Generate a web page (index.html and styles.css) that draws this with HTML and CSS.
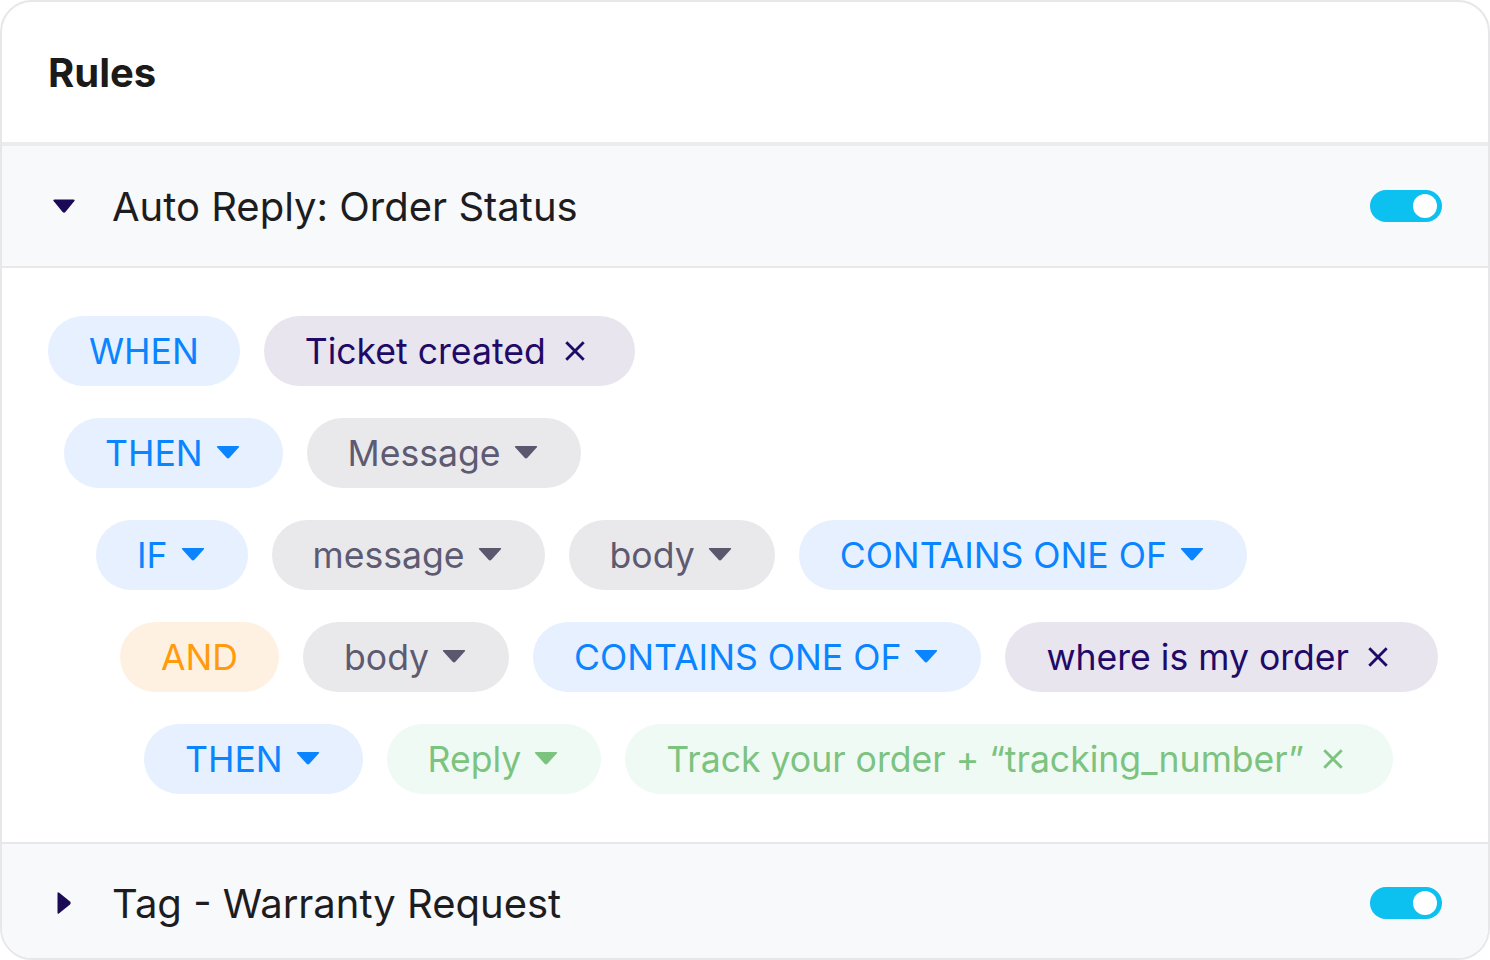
FILE: index.html
```html
<!DOCTYPE html>
<html lang="en">
<head>
<meta charset="utf-8">
<title>Rules</title>
<link rel="stylesheet" href="styles.css">
</head>
<body>
<div class="card">
  <div class="card-header">Rules</div>

  <div class="rule-head">
    <span class="chev">
      <svg width="24" height="16" viewBox="0 0 24 16"><path d="M2.5 1.5 H21.5 Q23.5 1.5 22.2 3.2 L13.4 14 Q12 15.6 10.6 14 L1.8 3.2 Q0.5 1.5 2.5 1.5 Z" fill="#1b0a55"/></svg>
    </span>
    <span class="rule-title">Auto Reply: Order Status</span>
    <span class="toggle"><span class="knob"></span></span>
  </div>

  <div class="rule-body">
    <div class="row r1">
      <span class="pill blue">WHEN</span>
      <span class="pill purple">Ticket created<svg class="x" viewBox="0 0 20 20"><path d="M3 3 L17 17 M17 3 L3 17" /></svg></span>
    </div>
    <div class="row r2">
      <span class="pill blue caret">THEN<svg class="tri" viewBox="0 0 24 14"><path d="M2 1 H22 Q24 1 22.7 2.6 L13.4 12.8 Q12 14.2 10.6 12.8 L1.3 2.6 Q0 1 2 1 Z"/></svg></span>
      <span class="pill grey caret">Message<svg class="tri" viewBox="0 0 24 14"><path d="M2 1 H22 Q24 1 22.7 2.6 L13.4 12.8 Q12 14.2 10.6 12.8 L1.3 2.6 Q0 1 2 1 Z"/></svg></span>
    </div>
    <div class="row r3">
      <span class="pill blue caret">IF<svg class="tri" viewBox="0 0 24 14"><path d="M2 1 H22 Q24 1 22.7 2.6 L13.4 12.8 Q12 14.2 10.6 12.8 L1.3 2.6 Q0 1 2 1 Z"/></svg></span>
      <span class="pill grey caret">message<svg class="tri" viewBox="0 0 24 14"><path d="M2 1 H22 Q24 1 22.7 2.6 L13.4 12.8 Q12 14.2 10.6 12.8 L1.3 2.6 Q0 1 2 1 Z"/></svg></span>
      <span class="pill grey caret">body<svg class="tri" viewBox="0 0 24 14"><path d="M2 1 H22 Q24 1 22.7 2.6 L13.4 12.8 Q12 14.2 10.6 12.8 L1.3 2.6 Q0 1 2 1 Z"/></svg></span>
      <span class="pill blue caret">CONTAINS ONE OF<svg class="tri" viewBox="0 0 24 14"><path d="M2 1 H22 Q24 1 22.7 2.6 L13.4 12.8 Q12 14.2 10.6 12.8 L1.3 2.6 Q0 1 2 1 Z"/></svg></span>
    </div>
    <div class="row r4">
      <span class="pill orange">AND</span>
      <span class="pill grey caret">body<svg class="tri" viewBox="0 0 24 14"><path d="M2 1 H22 Q24 1 22.7 2.6 L13.4 12.8 Q12 14.2 10.6 12.8 L1.3 2.6 Q0 1 2 1 Z"/></svg></span>
      <span class="pill blue caret">CONTAINS ONE OF<svg class="tri" viewBox="0 0 24 14"><path d="M2 1 H22 Q24 1 22.7 2.6 L13.4 12.8 Q12 14.2 10.6 12.8 L1.3 2.6 Q0 1 2 1 Z"/></svg></span>
      <span class="pill purple">where is my order<svg class="x" viewBox="0 0 20 20"><path d="M3 3 L17 17 M17 3 L3 17" /></svg></span>
    </div>
    <div class="row r5">
      <span class="pill blue caret">THEN<svg class="tri" viewBox="0 0 24 14"><path d="M2 1 H22 Q24 1 22.7 2.6 L13.4 12.8 Q12 14.2 10.6 12.8 L1.3 2.6 Q0 1 2 1 Z"/></svg></span>
      <span class="pill green caret">Reply<svg class="tri" viewBox="0 0 24 14"><path d="M2 1 H22 Q24 1 22.7 2.6 L13.4 12.8 Q12 14.2 10.6 12.8 L1.3 2.6 Q0 1 2 1 Z"/></svg></span>
      <span class="pill green">Track your order + “tracking_number”<svg class="x" viewBox="0 0 20 20"><path d="M3 3 L17 17 M17 3 L3 17" /></svg></span>
    </div>
  </div>

  <div class="rule-head last">
    <span class="chev">
      <svg width="16" height="24" viewBox="0 0 16 24"><path d="M1.5 2.5 V21.5 Q1.5 23.5 3.2 22.2 L14 13.4 Q15.6 12 14 10.6 L3.2 1.8 Q1.5 0.5 1.5 2.5 Z" fill="#1b0a55"/></svg>
    </span>
    <span class="rule-title">Tag - Warranty Request</span>
    <span class="toggle"><span class="knob"></span></span>
  </div>
</div>
</body>
</html>
```

FILE: styles.css
```css
* { box-sizing: border-box; }

html, body {
  margin: 0;
  padding: 0;
  background: #ffffff;
}

body {
  font-family: Inter, "Noto Sans", "Liberation Sans", sans-serif;
  width: 1490px;
  height: 960px;
}

.card {
  width: 1490px;
  height: 960px;
  border: 2px solid #e7e7ea;
  border-radius: 32px;
  overflow: hidden;
  display: flex;
  flex-direction: column;
  background: #ffffff;
}

.card-header {
  height: 144px;
  flex: none;
  padding-left: 46px;
  display: flex;
  align-items: center;
  font-size: 40px;
  font-weight: 700;
  color: #1a1a1a;
  border-bottom: 4px solid #ececef;
}

.rule-head {
  height: 122px;
  flex: none;
  display: flex;
  align-items: center;
  background: #f8f9fb;
  border-bottom: 2px solid #e8e8eb;
  padding: 0 46px 0 50px;
}

.rule-head.last {
  flex: 1;
  border-bottom: none;
  border-top: 2px solid #e8e8eb;
  padding-top: 4px;
}

.chev {
  width: 24px;
  height: 24px;
  display: flex;
  align-items: center;
  justify-content: center;
}

.rule-title {
  margin-left: 36px;
  font-size: 40px;
  color: #1d1d21;
  flex: 1;
}

.toggle {
  width: 72px;
  height: 32px;
  border-radius: 16px;
  background: #0cc0ef;
  display: flex;
  align-items: center;
  justify-content: flex-end;
  padding-right: 5px;
}

.knob {
  width: 24px;
  height: 24px;
  border-radius: 50%;
  background: #ffffff;
}

.rule-body {
  padding: 48px 46px 48px 46px;
  display: flex;
  flex-direction: column;
  gap: 32px;
}

.row {
  display: flex;
  gap: 24px;
}

.r2 { padding-left: 16px; }
.r3 { padding-left: 48px; }
.r4 { padding-left: 72px; }
.r5 { padding-left: 96px; }

.pill {
  height: 70px;
  border-radius: 35px;
  display: inline-flex;
  align-items: center;
  padding: 0 41px;
  font-size: 35.6px;
  white-space: nowrap;
}

.pill.caret { padding-right: 43px; }

.tri {
  width: 24px;
  height: 14px;
  margin-left: 13px;
  margin-top: -2px;
}

.x {
  width: 22px;
  height: 22px;
  margin-left: 18px;
  fill: none;
  stroke-width: 2.6;
  stroke-linecap: square;
}

.pill:has(.x) { padding-right: 49px; }

.blue { background: #e6f0fe; color: #0a84ff; }
.blue .tri { fill: #0a84ff; }

.grey { background: #e9e9ec; color: #5d5a72; }
.grey .tri { fill: #5a576e; }

.purple { background: #e8e5ef; color: #1f0a68; }
.purple .x { stroke: #1f0a68; }

.orange { background: #fff1e2; color: #ff9b0c; }

.green { background: #f0faf4; color: #7cc37f; }
.green .tri { fill: #7cc37f; }
.green .x { stroke: #7cc37f; }
```
